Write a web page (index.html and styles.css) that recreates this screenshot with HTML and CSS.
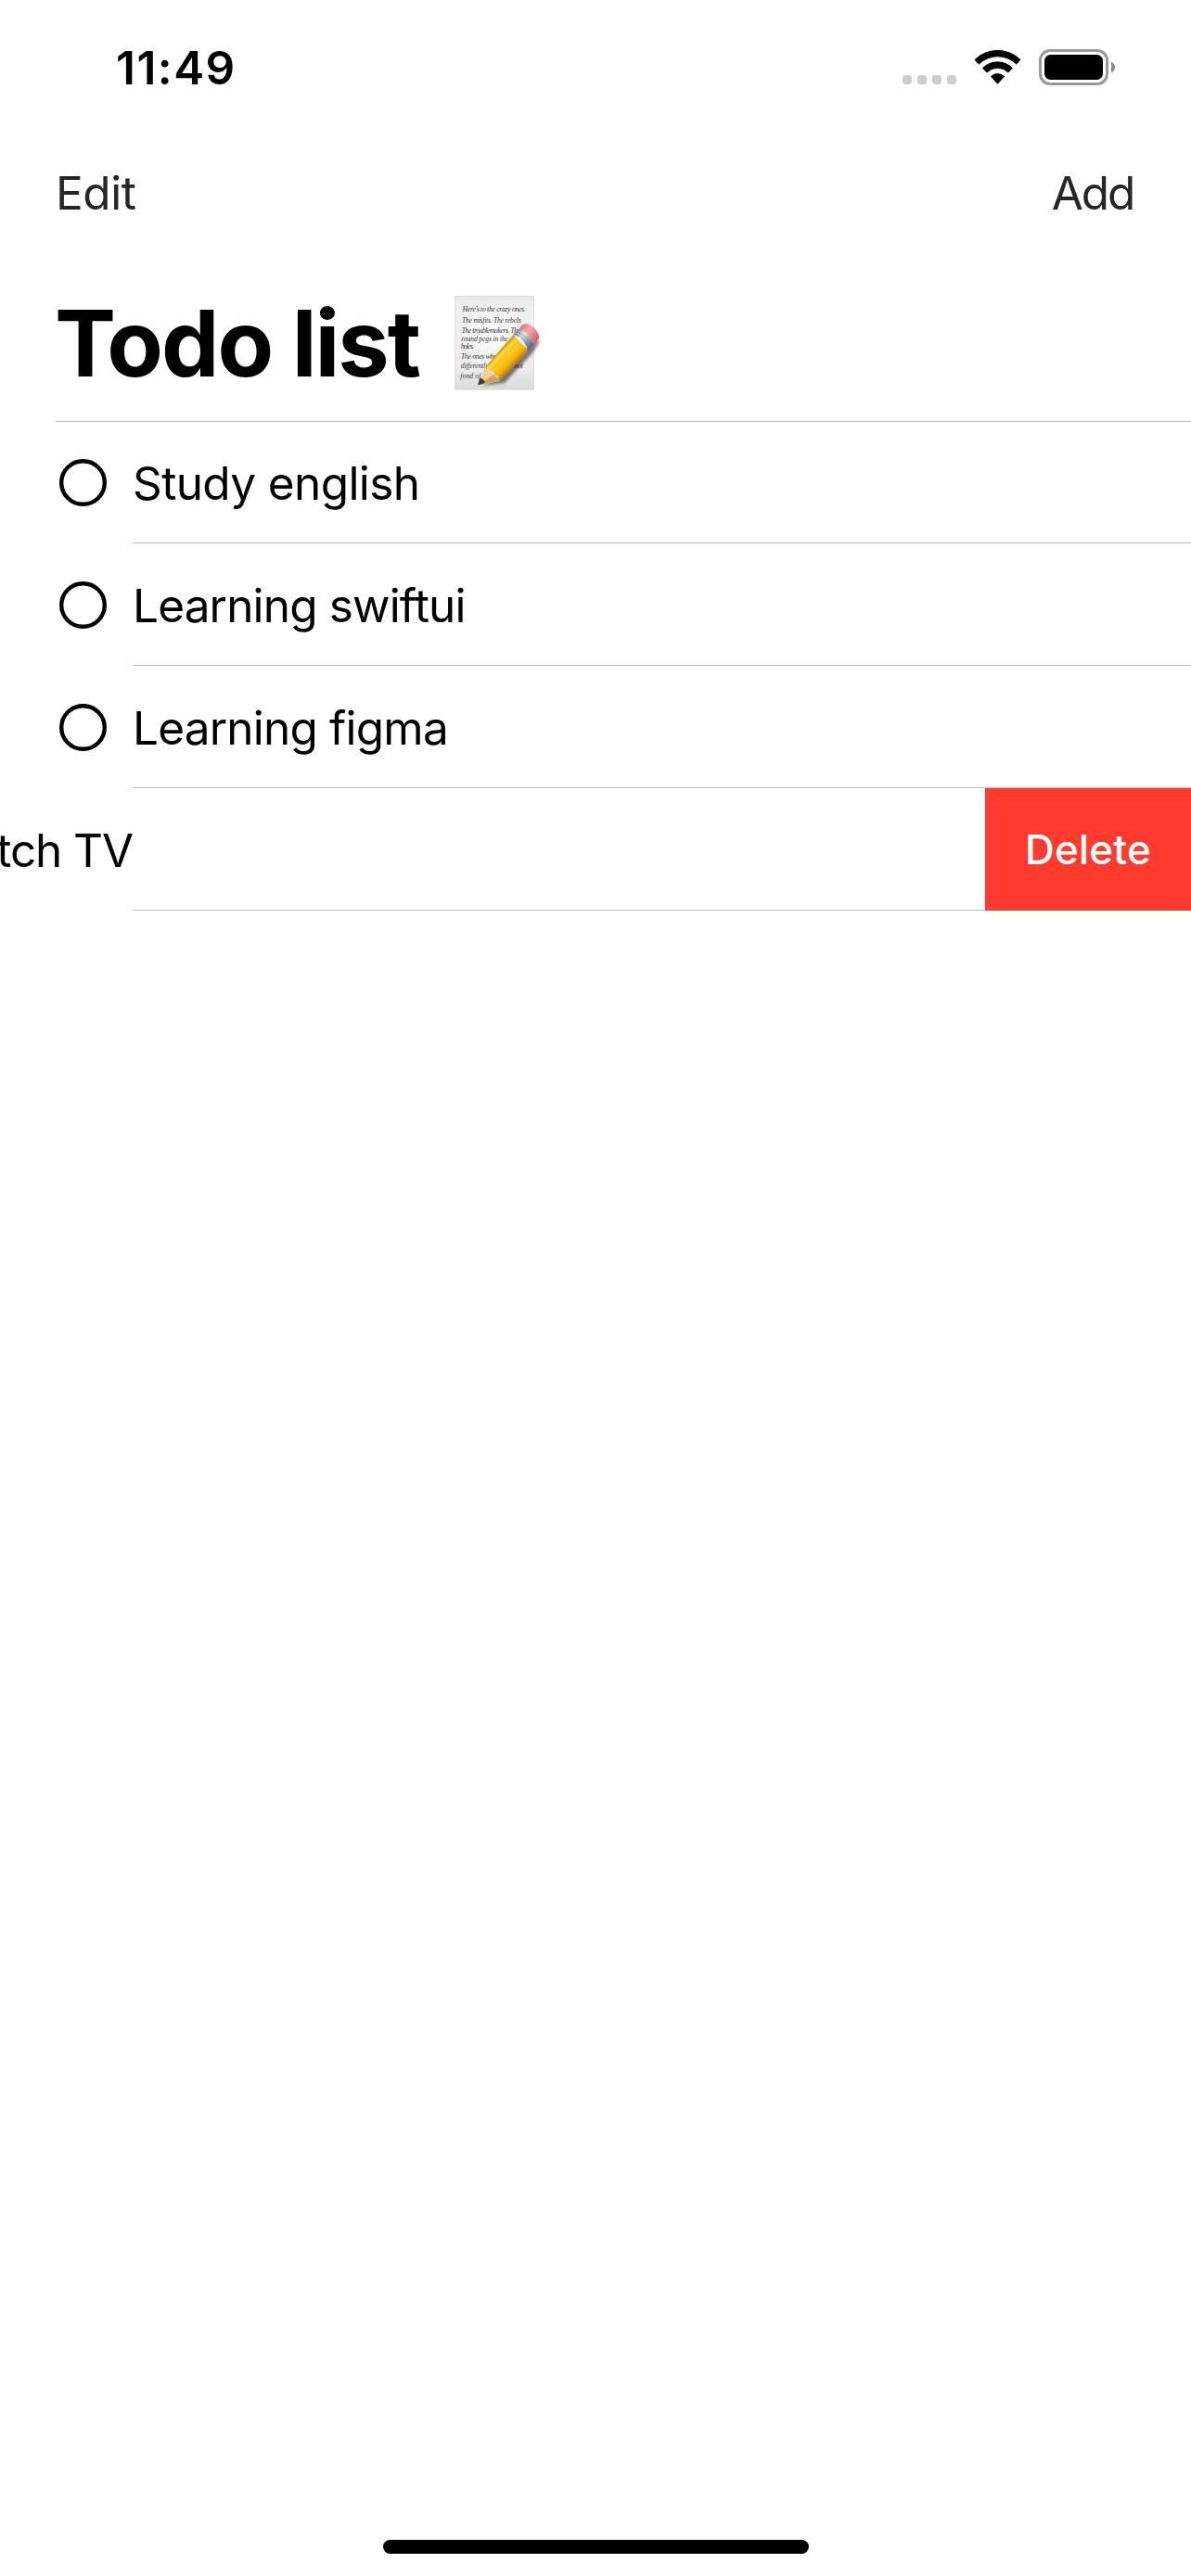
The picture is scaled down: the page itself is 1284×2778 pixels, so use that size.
FILE: index.html
```
<!DOCTYPE html>
<html lang="en">
<head>
<meta charset="utf-8">
<title>Todo list</title>
<link rel="stylesheet" href="styles.css">
</head>
<body>
<div class="screen">
  <header class="status-bar">
    <span class="clock">11:49</span>
    <svg class="status-icons" viewBox="970 50 240 45" aria-hidden="true">
      <g fill="#ccc">
        <rect x="973" y="81" width="10" height="10" rx="3.5"/>
        <rect x="989" y="81" width="10" height="10" rx="3.5"/>
        <rect x="1005" y="81" width="10" height="10" rx="3.5"/>
        <rect x="1021" y="81" width="10" height="10" rx="3.5"/>
      </g>
      <g stroke="#000" stroke-width="1" stroke-linejoin="round">
        <path d="M1051 64.4A35 35 0 0 1 1100 64.4L1095.7 69.1A28.6 28.6 0 0 0 1055.3 69.1Z"/>
        <path d="M1059.6 73.4A22.6 22.6 0 0 1 1091.4 73.4L1087 78A16.3 16.3 0 0 0 1064 78Z"/>
        <path d="M1068.5 82.5A9.9 9.9 0 0 1 1082.5 82.5L1075.5 90.2Z"/>
      </g>
      <rect x="1121.5" y="54.5" width="72" height="36" rx="10.5" fill="none" stroke="#999" stroke-width="3"/>
      <rect x="1126" y="59" width="63" height="27" rx="6.5"/>
      <path d="M1198 66.5Q1202 68.5 1202 72.5T1198 78.5Z" fill="#8c8c8c"/>
    </svg>
  </header>

  <nav class="toolbar">
    <span class="edit">Edit</span>
    <span class="add">Add</span>
  </nav>

  <div class="heading">
    <h1 class="title">Todo list</h1>
    <svg class="memo" viewBox="42 45 306 330" role="img" aria-label="Memo">
      <defs>
        <linearGradient id="paper" x1="0" y1="0" x2="0" y2="1">
          <stop offset="0" stop-color="#e4e5e5"/>
          <stop offset=".12" stop-color="#efefef"/>
          <stop offset=".75" stop-color="#ededed"/>
          <stop offset="1" stop-color="#d9dada"/>
        </linearGradient>
        <radialGradient id="shine">
          <stop offset="0" stop-color="#fff" stop-opacity=".8"/>
          <stop offset="1" stop-color="#fff" stop-opacity="0"/>
        </radialGradient>
        <linearGradient id="wood" gradientUnits="userSpaceOnUse" x1="205" y1="238" x2="254" y2="284">
          <stop offset="0" stop-color="#d99a12"/>
          <stop offset=".14" stop-color="#fbd548"/>
          <stop offset=".34" stop-color="#fccb1f"/>
          <stop offset=".7" stop-color="#f6b90d"/>
          <stop offset=".8" stop-color="#e69f0c"/>
          <stop offset="1" stop-color="#b97808"/>
        </linearGradient>
        <linearGradient id="metal" gradientUnits="userSpaceOnUse" x1="259" y1="174" x2="306" y2="224">
          <stop offset="0" stop-color="#7f8b98"/>
          <stop offset=".3" stop-color="#e6edf3"/>
          <stop offset=".65" stop-color="#9eabb8"/>
          <stop offset="1" stop-color="#5d6773"/>
        </linearGradient>
        <linearGradient id="rubber" gradientUnits="userSpaceOnUse" x1="275" y1="155" x2="325" y2="205">
          <stop offset="0" stop-color="#dc7078"/>
          <stop offset=".35" stop-color="#f7aaae"/>
          <stop offset="1" stop-color="#d1616c"/>
        </linearGradient>
        <filter id="soft" x="-20%" y="-20%" width="140%" height="140%"><feGaussianBlur stdDeviation="5"/></filter>
      </defs>
      <rect x="61" y="58" width="257" height="303" fill="url(#paper)"/>
      <ellipse cx="185" cy="185" rx="115" ry="125" fill="url(#shine)"/>
      <rect x="62" y="59" width="255" height="301" fill="none" stroke="#d6d7d7" stroke-width="2"/>
      <g class="memo-ink">
        <text x="86" y="109" textLength="204">Here’s to the crazy ones.</text>
        <text x="84" y="145" textLength="196">The misfits. The rebels.</text>
        <text x="83" y="178" textLength="190">The troublemakers. The</text>
        <text x="82" y="204" textLength="152">round pegs in the</text>
        <text x="81" y="228" textLength="42">holes.</text>
        <text x="81" y="262" textLength="116">The ones who</text>
        <text x="80" y="290" textLength="202">differently. They’re not</text>
        <text x="79" y="324" textLength="66">fond of</text>
      </g>
      <path d="M148 349L222 338L312 242L338 202L320 205L210 320Z" fill="#000" opacity=".5" filter="url(#soft)"/>
      <path d="M138 346L158 288L208 332Z" fill="#efcf94"/>
      <path d="M138 346L186 311L208 332Z" fill="#cfa263"/>
      <path d="M135 346Q139 331 143 322Q154 327 160 336Q150 344 135 346Z" fill="#3d3d3d"/>
      <path d="M158 289L250 183L299 235L208 332Q207 313 190 315Q187 298 174 300Q166 286 158 289Z" fill="url(#wood)"/>
      <path d="M178 299L266 200M193 314L286 217" stroke="#e3a00c" stroke-width="2" opacity=".6"/>
      <path d="M250 183L269 164Q305 175 317 213L298 236Q287 196 250 183Z" fill="url(#metal)"/>
      <path d="M254 179Q292 193 303 229M260 173Q298 186 309 222" fill="none" stroke="#687482" stroke-width="2.5" opacity=".75"/>
      <path d="M269 164Q278 146 296 148Q325 158 334 188Q334 203 317 213Q305 175 269 164Z" fill="url(#rubber)"/>
    </svg>
  </div>

  <main class="list">
    <div class="row first">
      <div class="lead"><svg class="circle" viewBox="0 0 51 51"><circle cx="25.5" cy="25.5" r="23.3"/></svg></div>
      <div class="body"><span class="label study">Study english</span></div>
    </div>
    <div class="row">
      <div class="lead"><svg class="circle" viewBox="0 0 51 51"><circle cx="25.5" cy="25.5" r="23.3"/></svg></div>
      <div class="body"><span class="label swift">Learning swiftui</span></div>
    </div>
    <div class="row">
      <div class="lead"><svg class="circle" viewBox="0 0 51 51"><circle cx="25.5" cy="25.5" r="23.3"/></svg></div>
      <div class="body"><span class="label figma">Learning figma</span></div>
    </div>
    <div class="row">
      <div class="lead swiped"><span class="label tv">Watch TV</span></div>
      <div class="body"></div>
      <div class="delete">Delete</div>
    </div>
  </main>

  <div class="home-indicator"></div>
</div>
</body>
</html>
```
FILE: styles.css
```
* { box-sizing: border-box; }

body {
  margin: 0;
  background: #fff;
  color: #000;
  font-family: Inter, "Liberation Sans", sans-serif;
}

.screen {
  display: flex;
  flex-direction: column;
  width: 1284px;
  height: 2778px;
  overflow: hidden;
}

.status-bar {
  display: flex;
  justify-content: space-between;
  height: 178px;
  padding: 43px 74px 0 125px;
}

.clock {
  font-size: 49.5px;
  line-height: 60px;
  font-weight: 600;
  letter-spacing: 1.5px;
}

.status-icons {
  width: 240px;
  height: 45px;
  margin-top: 7px;
}

.toolbar {
  display: flex;
  justify-content: space-between;
  height: 132px;
  padding: 0 62px 0 60px;
  color: #262626;
  font-size: 49.5px;
  line-height: 60px;
}

.edit { letter-spacing: -0.4px; }
.add { letter-spacing: -2.2px; }

.heading {
  display: flex;
  height: 145px;
  margin-left: 60px;
  border-bottom: 1px solid #bfbfc1;
}

.title {
  width: 424px;
  margin: 0 0 0 -1px;
  font-size: 99px;
  line-height: 120px;
  font-weight: 700;
  letter-spacing: -2px;
  white-space: nowrap;
}

.memo {
  width: 102px;
  height: 110px;
  margin: 5px 0 0 1px;
}

.memo-ink {
  fill: #3c3c3c;
  font: italic 23px "Liberation Serif", serif;
}

.row {
  display: flex;
  height: 132px;
}

.row.first { height: 131px; }

.lead {
  display: flex;
  flex: none;
  align-items: flex-end;
  width: 143px;
  padding: 0 0 40px 64px;
}

.lead.swiped {
  justify-content: flex-end;
  padding: 0 0 35px;
}

.circle {
  width: 51px;
  height: 51px;
  fill: none;
  stroke: #000;
  stroke-width: 4.4px;
}

.body {
  display: flex;
  flex: 1;
  align-items: flex-end;
  padding-bottom: 34px;
  border-bottom: 1px solid #bfbfc1;
}

.label {
  font-size: 49.5px;
  line-height: 60px;
  white-space: nowrap;
}

.study { letter-spacing: -0.62px; }
.swift { letter-spacing: -0.84px; }
.figma { letter-spacing: -0.8px; }
.tv { letter-spacing: -1.1px; }

.delete {
  display: flex;
  align-items: flex-end;
  width: 222px;
  padding: 0 0 38px 43px;
  border-bottom: 1px solid #d0382e;
  background: #ff3b30;
  color: #fff;
  font-size: 44px;
  line-height: 54px;
  font-weight: 500;
  letter-spacing: 0.2px;
}

.home-indicator {
  width: 459px;
  height: 15px;
  margin: auto auto 24px 413px;
  border-radius: 8px;
  background: #000;
}
```
